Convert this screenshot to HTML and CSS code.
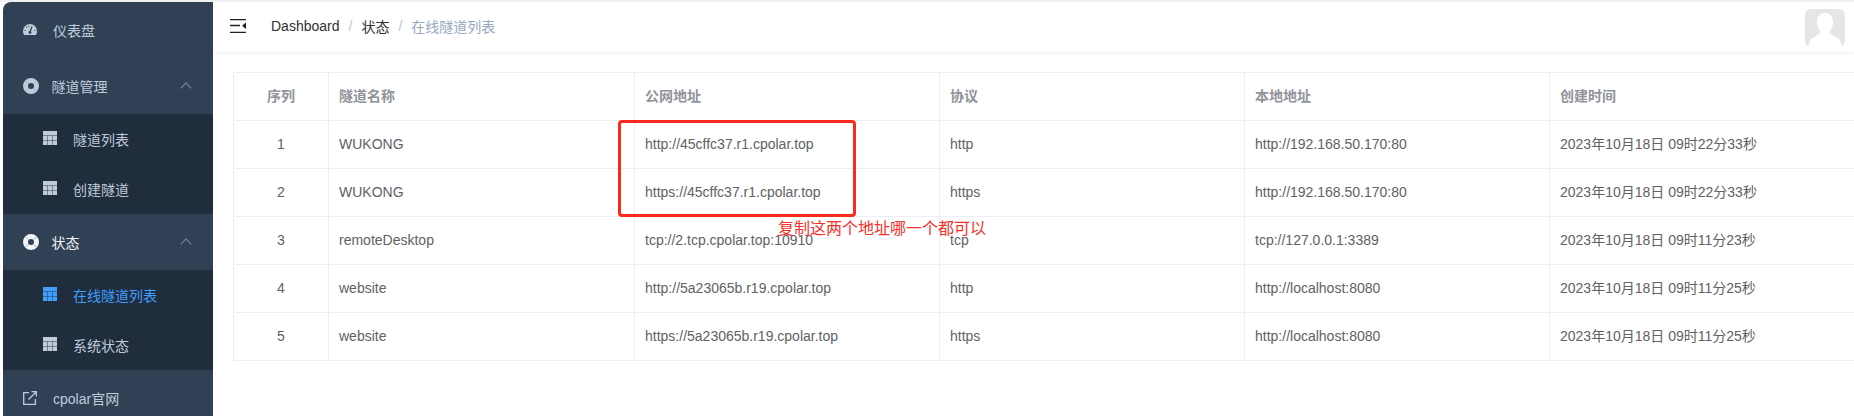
FILE: index.html
```html
<!DOCTYPE html>
<html lang="en">

<head>
  <meta charset="UTF-8">
  <title>在线隧道列表</title>
  <link rel="stylesheet" href="styles.css">
</head>

<body>
  <svg class="icon-defs" width="0" height="0">
    <symbol id="icon-table" viewBox="0 0 14 14">
      <path fill="currentColor" d="M0 0h14v14H0z" />
      <path fill="none" stroke="#1f2d3d" stroke-opacity=".45" stroke-width="1" d="M0 4.500h14M0 9.500h14M4.500 4.500v9.500M9.500 4.500v9.500" />
    </symbol>
    <symbol id="icon-ring" viewBox="0 0 16 16">
      <circle cx="8" cy="8" r="5.500" fill="none" stroke="currentColor" stroke-width="5" />
      <path fill="none" stroke="#8fb9dc" stroke-width="1" d="M2.500 3l3 2.500M13.500 3l-3 2.500M2.500 13l3-2.500M13.500 13l-3-2.500" />
    </symbol>
  </svg>

  <div class="app">
    <aside class="sidebar">
      <a class="menu-title">
        <svg class="menu-icon gauge" viewBox="0 0 14 11">
          <path fill="currentColor" d="M7 0a7 7 0 0 0-7 7c0 1.500.4 2.800 1 4h12c.6-1.200 1-2.500 1-4a7 7 0 0 0-7-7z" />
          <path fill="none" stroke="#304156" stroke-width="1.200" d="M7 8l2-5.500M3.300 2.800l.7.7M1.500 6.500h1M11.500 6.500h1M5.500 1.700l.2.800" />
          <circle cx="7" cy="8.500" r="1.400" fill="#304156" />
        </svg>
        <span>仪表盘</span>
      </a>

      <a class="menu-title wide-icon">
        <svg class="menu-icon ring"><use href="#icon-ring" /></svg>
        <span>隧道管理</span>
        <i class="chevron"></i>
      </a>
      <div class="submenu">
        <a class="submenu-item"><svg class="sub-icon"><use href="#icon-table" /></svg>隧道列表</a>
        <a class="submenu-item"><svg class="sub-icon"><use href="#icon-table" /></svg>创建隧道</a>
      </div>

      <a class="menu-title wide-icon is-open">
        <svg class="menu-icon ring"><use href="#icon-ring" /></svg>
        <span>状态</span>
        <i class="chevron"></i>
      </a>
      <div class="submenu">
        <a class="submenu-item is-active"><svg class="sub-icon"><use href="#icon-table" /></svg>在线隧道列表</a>
        <a class="submenu-item"><svg class="sub-icon"><use href="#icon-table" /></svg>系统状态</a>
      </div>

      <a class="menu-title">
        <svg class="menu-icon" viewBox="0 0 14 14">
          <path fill="none" stroke="currentColor" stroke-width="1.300" d="M6 1.600H.7v11.700h11.700V8M5.500 8.500L13 1M8.500.7h4.800v4.800" />
        </svg>
        <span>cpolar官网</span>
      </a>
    </aside>

    <main class="main">
      <header class="navbar">
        <svg class="hamburger" viewBox="0 0 16 14">
          <path fill="none" stroke="#222" stroke-width="1.300" d="M0 .7h16M0 6.500h10M0 13.300h16" />
          <path fill="#222" d="M16 3.500v6.500l-4-3.200z" />
        </svg>
        <nav class="breadcrumb">
          <span class="crumb">Dashboard</span>
          <span class="sep">/</span>
          <span class="crumb">状态</span>
          <span class="sep">/</span>
          <span class="crumb current">在线隧道列表</span>
        </nav>
        <svg class="avatar" viewBox="0 0 40 38">
          <rect width="40" height="38" rx="6" fill="#e6e6e6" />
          <path fill="#fff" d="M20 4c-5.500 0-8 4-8 9 0 3.500 1 6 3 8.500 .6 1 .3 3-1 4-2.500 1.600-6 3-8.500 4.500L3 38h34l-2.500-8c-2.500-1.500-6-2.900-8.500-4.500-1.300-1-1.600-3-1-4 2-2.500 3-5 3-8.500 0-5-2.500-9-8-9z" />
        </svg>
      </header>

      <section class="content">
        <table class="tunnel-table">
          <colgroup>
            <col class="col-index">
            <col class="col-name">
            <col class="col-url">
            <col class="col-proto">
            <col class="col-local">
            <col class="col-time">
          </colgroup>
          <thead>
            <tr>
              <th class="center">序列</th>
              <th>隧道名称</th>
              <th>公网地址</th>
              <th>协议</th>
              <th>本地地址</th>
              <th>创建时间</th>
            </tr>
          </thead>
          <tbody>
            <tr>
              <td class="center">1</td>
              <td>WUKONG</td>
              <td>http://45cffc37.r1.cpolar.top</td>
              <td>http</td>
              <td>http://192.168.50.170:80</td>
              <td class="time">2023年10月18日 09时22分33秒</td>
            </tr>
            <tr>
              <td class="center">2</td>
              <td>WUKONG</td>
              <td>https://45cffc37.r1.cpolar.top</td>
              <td>https</td>
              <td>http://192.168.50.170:80</td>
              <td class="time">2023年10月18日 09时22分33秒</td>
            </tr>
            <tr>
              <td class="center">3</td>
              <td>remoteDesktop</td>
              <td>tcp://2.tcp.cpolar.top:10910</td>
              <td>tcp</td>
              <td>tcp://127.0.0.1:3389</td>
              <td class="time">2023年10月18日 09时11分23秒</td>
            </tr>
            <tr>
              <td class="center">4</td>
              <td>website</td>
              <td>http://5a23065b.r19.cpolar.top</td>
              <td>http</td>
              <td>http://localhost:8080</td>
              <td class="time">2023年10月18日 09时11分25秒</td>
            </tr>
            <tr>
              <td class="center">5</td>
              <td>website</td>
              <td>https://5a23065b.r19.cpolar.top</td>
              <td>https</td>
              <td>http://localhost:8080</td>
              <td class="time">2023年10月18日 09时11分25秒</td>
            </tr>
          </tbody>
        </table>
      </section>
    </main>
  </div>

  <!-- screenshot annotation drawn over the table -->
  <div class="mark-box"></div>
  <div class="mark-text">复制这两个地址哪一个都可以</div>
</body>

</html>
```

FILE: styles.css
```css
html {
  box-sizing: border-box;
  font-family: "Liberation Sans", "Noto Sans CJK SC", sans-serif;
  font-size: 14px;
}

*,
*::before,
*::after {
  box-sizing: border-box;
}

html,
body {
  height: 416px;
  overflow: hidden;
}

body {
  position: relative;
  margin: 0;
  padding-left: 3px;
  background-color: #fff;
  border-top: 2px solid #f0f0f0;
}

.icon-defs {
  display: block;
  height: 0;
}

.app {
  display: flex;
  height: 414px;
}

/* sidebar */
.sidebar {
  flex: 0 0 210px;
  overflow: hidden;
  background-color: #304156;
  border-top-left-radius: 8px;
  color: #bfcbd9;
}

.menu-title {
  display: flex;
  align-items: center;
  height: 56px;
  padding-left: 20px;
  padding-bottom: 1px;
  gap: 16px;
}

.menu-title.wide-icon {
  gap: 13px;
}

.menu-title.is-open {
  color: #f4f4f5;
}

.menu-icon {
  flex: none;
  width: 14px;
  height: 14px;
}

.menu-icon.gauge {
  height: 11px;
}

.menu-icon.ring {
  width: 16px;
  height: 16px;
  margin-left: -0.5px;
}

.chevron {
  width: 8px;
  height: 8px;
  margin-left: auto;
  margin-right: 23px;
  margin-top: 5px;
  border-top: 1px solid #7d8a9a;
  border-left: 1px solid #7d8a9a;
  transform: rotate(45deg);
}

.submenu {
  background-color: #1f2d3d;
}

.submenu-item {
  display: flex;
  align-items: center;
  height: 50px;
  padding-left: 40px;
  gap: 16px;
}

.submenu-item.is-active {
  color: #409eff;
}

.sub-icon {
  flex: none;
  width: 14px;
  height: 14px;
  margin-top: -2px;
}

/* navbar */
.main {
  flex: 1;
  min-width: 0;
  overflow: hidden;
}

.navbar {
  display: flex;
  align-items: center;
  height: 50px;
  padding: 0 9px 0 17px;
  background-color: #fff;
  box-shadow: 0 1px 4px rgba(0, 21, 41, 0.08);
}

.hamburger {
  flex: none;
  width: 16px;
  height: 14px;
  margin-top: -3px;
}

.breadcrumb {
  display: flex;
  align-items: center;
  margin-left: 25px;
  padding-bottom: 2px;
  color: #303133;
}

.sep {
  margin: 0 9px;
  color: #c0c4cc;
}

.crumb.current {
  color: #97a8be;
}

.avatar {
  width: 40px;
  height: 38px;
  margin-left: auto;
  margin-top: 1px;
}

/* table */
.content {
  padding: 20px 0 0 20px;
}

.tunnel-table {
  table-layout: fixed;
  width: 1630px;
  border-collapse: collapse;
  color: #606266;
}

.col-index {
  width: 95px;
}

.col-name {
  width: 306px;
}

.col-url {
  width: 305px;
}

.col-proto {
  width: 305px;
}

.col-local {
  width: 305px;
}

.tunnel-table th,
.tunnel-table td {
  height: 48px;
  padding: 0 10px 2px;
  border: 1px solid #ebeef5;
  text-align: left;
  font-size: 14px;
  font-weight: normal;
}

.tunnel-table th {
  padding-bottom: 3px;
  color: #909399;
  font-weight: bold;
}

.tunnel-table td.time {
  padding-bottom: 4px;
}

.tunnel-table .center {
  text-align: center;
}

/* annotation */
.mark-box {
  position: absolute;
  left: 618px;
  top: 118px;
  width: 238px;
  height: 97px;
  border: 3px solid #fb2a1d;
  border-radius: 4px;
}

.mark-text {
  position: absolute;
  left: 778px;
  top: 216px;
  color: #f5312a;
  font-size: 16px;
  line-height: 22px;
  white-space: nowrap;
}
```
